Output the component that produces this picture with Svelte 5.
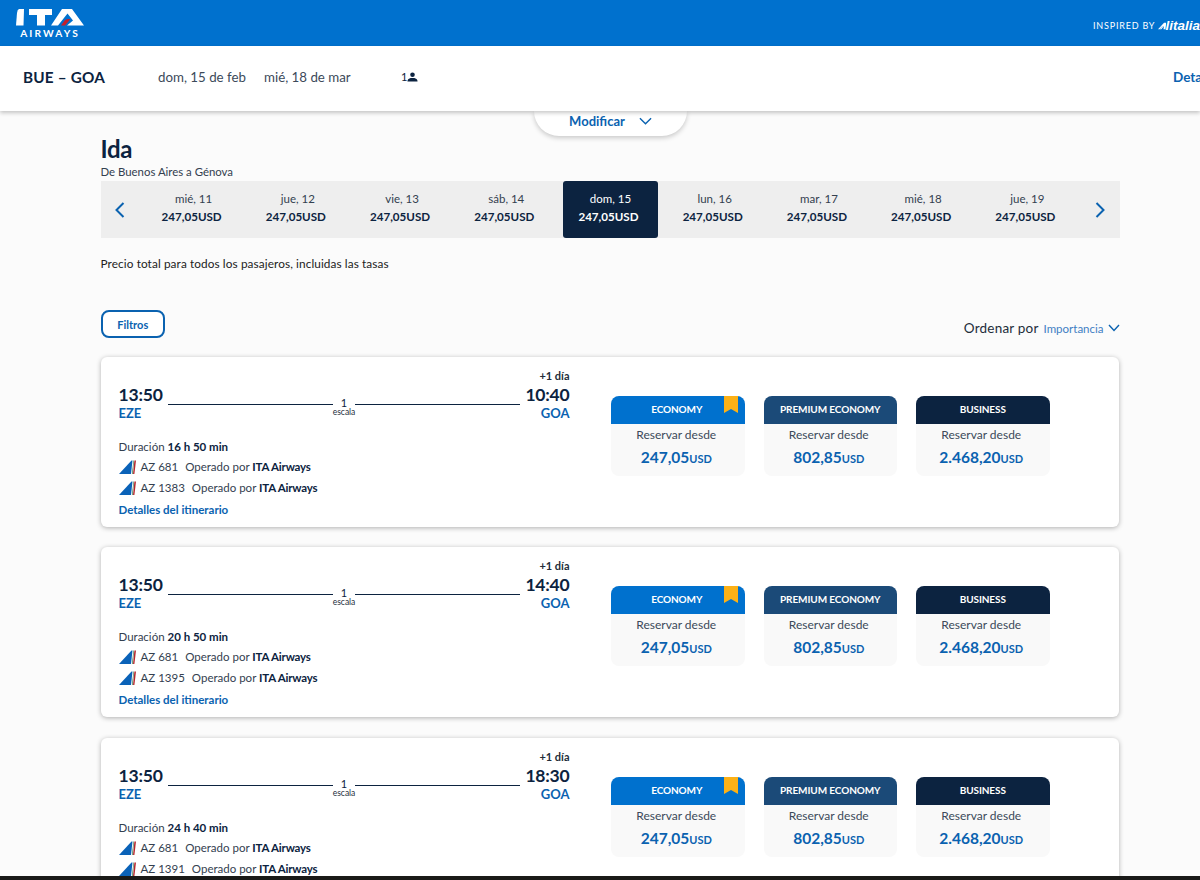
<script>
  const days = [
    ['mié, 11', false], ['jue, 12', false], ['vie, 13', false], ['sáb, 14', false], ['dom, 15', true],
    ['lun, 16', false], ['mar, 17', false], ['mié, 18', false], ['jue, 19', false]
  ];
  const flights = [
    { arr: '10:40', dur: '16 h 50 min', second: 'AZ 1383' },
    { arr: '14:40', dur: '20 h 50 min', second: 'AZ 1395' },
    { arr: '18:30', dur: '24 h 40 min', second: 'AZ 1391' }
  ];
  const fares = [
    { name: 'ECONOMY', price: '247,05', cls: 'eco', flag: true },
    { name: 'PREMIUM ECONOMY', price: '802,85', cls: 'prem', flag: false },
    { name: 'BUSINESS', price: '2.468,20', cls: 'bus', flag: false }
  ];
</script>

{#snippet tail()}
  <svg class="tail" viewBox="0 0 17 14" width="17" height="14" aria-hidden="true">
    <path d="M0 14 L12.500 0.500 L13.500 0.500 L12 14 Z" fill="#0a62b8" />
    <path d="M13 14 L14.400 0.500 L15 0.500 L13.700 14 Z" fill="#2e7d4f" />
    <path d="M14 14 L15.400 0.500 L17 0.500 L15.400 14 Z" fill="#b5272d" />
  </svg>
{/snippet}

<div class="page">
  <header class="top">
    <div class="logo">
      <svg viewBox="0 0 70 20" width="70" height="20" aria-hidden="true">
        <path d="M4 3 H9 L8.500 19.500 H1 L2 7 Q2.300 3.500 4 3 Z" fill="#fff" />
        <path d="M14 3 H37 V9 H30 V19.500 H22 V9 H14 Z" fill="#fff" />
        <path d="M36 19.500 L47 3 H57 L69 19.500 H52 L58 14.500 L52.500 7.500 L43 19.500 Z" fill="#fff" />
        <path d="M46 19.500 L50 14 C52 12.800 54 12.800 55.500 13 L50 19.500 Z" fill="#c4202b" />
      </svg>
      <span class="airways">AIRWAYS</span>
    </div>
    <div class="inspired">
      <span class="by">INSPIRED BY</span>
      <svg viewBox="0 0 15 12" width="15" height="12" aria-hidden="true">
        <path d="M0 12 L11 0 H15 L13.500 12 H10 L10.800 6 L6 12 Z" fill="#fff" />
        <path d="M3 12 L8 6.500" stroke="#0071ce" stroke-width="0.700" />
      </svg>
      <span class="alitalia">litalia</span>
    </div>
  </header>

  <div class="summary">
    <span class="route">BUE – GOA</span>
    <span class="date first">dom, 15 de feb</span>
    <span class="date second">mié, 18 de mar</span>
    <span class="pax">1<svg viewBox="0 0 12 10" width="11" height="10" aria-hidden="true"><circle cx="6" cy="2.600" r="2.500" fill="#0c2340" /><path d="M0.500 10 C0.500 6.500 3.500 6 6 6 C8.500 6 11.500 6.500 11.500 10 Z" fill="#0c2340" /></svg></span>
    <span class="details">Detalles</span>
  </div>

  <button class="modify">
    <span>Modificar</span>
    <svg viewBox="0 0 14 8" width="13" height="8" aria-hidden="true"><path d="M1 1 L7 7 L13 1" fill="none" stroke="#0a62b0" stroke-width="1.500" /></svg>
  </button>

  <main>
    <h1>Ida</h1>
    <p class="sub">De Buenos Aires a Génova</p>

    <div class="strip">
      <div class="arrow left">
        <svg viewBox="0 0 10 16" width="10" height="16" aria-hidden="true"><path d="M8.500 1 L1.500 8 L8.500 15" fill="none" stroke="#0a62b0" stroke-width="2" /></svg>
      </div>
      {#each days as [label, active]}
        <div class="day" class:active>
          <span class="d">{label}</span>
          <span class="p">247,05USD</span>
        </div>
      {/each}
      <div class="arrow right">
        <svg viewBox="0 0 10 16" width="10" height="16" aria-hidden="true"><path d="M1.500 1 L8.500 8 L1.500 15" fill="none" stroke="#0a62b0" stroke-width="2" /></svg>
      </div>
    </div>

    <p class="note">Precio total para todos los pasajeros, incluidas las tasas</p>

    <div class="tools">
      <button class="filters">Filtros</button>
      <div class="sort">
        <span class="sl">Ordenar por</span>
        <span class="sv">Importancia</span>
        <svg viewBox="0 0 12 8" width="12" height="8" aria-hidden="true"><path d="M1 1 L6 6.500 L11 1" fill="none" stroke="#0a62b0" stroke-width="1.400" /></svg>
      </div>
    </div>

    <div class="list">
      {#each flights as f}
        <article class="card">
          <div class="info">
            <div class="plus">+1 día</div>
            <div class="times">
              <div class="end">
                <span class="time">13:50</span>
                <span class="code">EZE</span>
              </div>
              <div class="line">
                <span class="rule"></span>
                <span class="stops"><b>1</b><i>escala</i></span>
                <span class="rule"></span>
              </div>
              <div class="end right">
                <span class="time">{f.arr}</span>
                <span class="code">GOA</span>
              </div>
            </div>
            <div class="dur">Duración <strong>{f.dur}</strong></div>
            <div class="op">{@render tail()}<span class="no">AZ 681</span><span>Operado por <strong>ITA Airways</strong></span></div>
            <div class="op">{@render tail()}<span class="no">{f.second}</span><span>Operado por <strong>ITA Airways</strong></span></div>
            <a class="more" href="#top">Detalles del itinerario</a>
          </div>
          <div class="fares">
            {#each fares as fare}
              <div class="fare">
                <div class="head {fare.cls}">
                  {fare.name}
                  {#if fare.flag}
                    <svg class="flag" viewBox="0 0 14 17" width="14" height="17" aria-hidden="true"><path d="M0 0 H14 V17 L7 13 L0 17 Z" fill="#fcb116" /></svg>
                  {/if}
                </div>
                <div class="from">Reservar desde</div>
                <div class="price">{fare.price}<small>USD</small></div>
              </div>
            {/each}
          </div>
        </article>
      {/each}
    </div>
  </main>

  <div class="taskbar"></div>
</div>

<style>
  :global(body) { margin: 0; background: #fbfbfb; overflow: hidden; }
  .page {
    position: relative; width: 1200px; height: 880px; overflow: hidden;
    font-family: Lato, "Liberation Sans", sans-serif; color: #0c2340; background: #fbfbfb;
  }
  .top {
    height: 46px; background: #0071ce; display: flex; justify-content: space-between; align-items: flex-start;
    overflow: hidden;
  }
  .logo { margin-left: 15px; margin-top: 6px; width: 70px; display: flex; flex-direction: column; align-items: center; }
  .logo svg { display: block; }
  .airways { color: #fff; font-size: 10.200px; letter-spacing: 2.100px; line-height: 12px; font-weight: 700; margin-top: 1px; }
  .inspired { display: flex; align-items: center; margin-top: 18px; color: #fff; width: 107px; white-space: nowrap; flex: none; }
  .by { font-size: 9px; letter-spacing: 0.800px; font-weight: 400; margin-right: 3px; }
  .alitalia { font-family: "Liberation Sans", sans-serif; font-size: 13.500px; font-weight: 700; font-style: italic; margin-left: -1px; }

  .summary {
    position: relative; z-index: 2; height: 65px; box-sizing: border-box; padding-bottom: 4px; background: #fff; box-shadow: 0 2px 4px rgba(0, 0, 0, 0.22);
    display: flex; align-items: center; white-space: nowrap; overflow: hidden;
  }
  .route { margin-left: 23px; font-size: 15.300px; font-weight: 700; width: 135px; letter-spacing: 0.200px; }
  .date { font-size: 13.300px; color: #3c4a5a; }
  .first { width: 106px; }
  .second { width: 137px; }
  .pax { display: flex; align-items: center; font-size: 11px; font-weight: 400; width: 771px; flex: none; }
  .details { color: #0a62b0; font-size: 13.500px; font-weight: 700; position: absolute; left: 1173px; }

  .modify {
    position: absolute; z-index: 1; left: 534px; top: 111px; width: 153px; height: 25px; border: 0; padding: 0 0 6px;
    background: #fff; border-radius: 0 0 26px 26px; box-shadow: 0 2px 5px rgba(0, 0, 0, 0.2);
    display: flex; align-items: center; justify-content: center; gap: 14px;
    font: 700 13px Lato, sans-serif; color: #0a62b0;
  }

  main { width: 1019px; margin-left: 100.500px; }
  h1 { margin: 24px 0 0; font-size: 24px; line-height: 28px; font-weight: 700; color: #0c2340; letter-spacing: -0.300px; }
  .sub { margin: 2px 0 0; font-size: 11.400px; line-height: 13px; color: #33404f; }

  .strip { margin-top: 3px; height: 57px; background: #eeeeee; display: flex; }
  .arrow { flex: none; display: flex; align-items: center; }
  .arrow.left { width: 41px; padding-left: 14px; box-sizing: border-box; }
  .arrow.right { width: 40px; padding-left: 16px; box-sizing: border-box; }
  .day {
    flex: 1; display: flex; flex-direction: column; align-items: center; gap: 3px; padding-top: 10px; box-sizing: border-box;
    border-radius: 3px; color: #0c2340; margin: 0 4.600px;
  }
  .day.active { background: #0c2340; color: #fff; }
  .d { font-size: 11.500px; line-height: 15px; color: #33404f; }
  .active .d { color: #fff; }
  .p { font-size: 11.600px; line-height: 15px; font-weight: 700; margin-right: 4px; }

  .note { margin: 19px 0 0; font-size: 11.800px; line-height: 14px; color: #222; letter-spacing: 0.100px; }

  .tools { margin-top: 39px; height: 47px; display: flex; justify-content: space-between; align-items: flex-start; }
  .filters {
    width: 64.500px; height: 28px; border: 2px solid #0a62b0; border-radius: 8px; background: #fff; box-sizing: border-box;
    font: 700 11px Lato, sans-serif; color: #0a62b0; padding: 0;
  }
  .sort { display: flex; align-items: center; margin-top: 10px; height: 16px; }
  .sl { font-size: 13.500px; color: #222d3a; margin-right: 5px; letter-spacing: 0.200px; }
  .sv { font-size: 11.500px; color: #3f7fc4; margin-right: 4px; }

  .list { display: flex; flex-direction: column; gap: 20.400px; }
  .card {
    flex: none; height: 170px; box-sizing: border-box; width: 1018px; background: #fff; border-radius: 6px;
    box-shadow: 0 1px 5px rgba(0, 0, 0, 0.3); display: flex; padding: 12px 0 0 18px;
  }
  .info { width: 451px; flex: none; }
  .plus { text-align: right; font-size: 11px; line-height: 14px; font-weight: 700; color: #222d3a; }
  .times { display: flex; align-items: flex-start; margin-top: 1px; }
  .end { display: flex; flex-direction: column; flex: none; }
  .end.right { align-items: flex-end; }
  .time { font-size: 17.500px; line-height: 20px; padding-top: 1px; font-weight: 700; letter-spacing: -0.200px; }
  .code { font-size: 13px; line-height: 16px; font-weight: 700; color: #0a62b0; }
  .line { flex: 1; display: flex; align-items: flex-start; margin: 0 5px; }
  .rule { flex: 1; height: 1px; background: #0c2340; margin-top: 20px; }
  .stops { display: flex; flex-direction: column; align-items: center; width: 22px; margin-top: 13px; }
  .stops b { font-weight: 400; font-size: 11px; line-height: 12px; }
  .stops i { font-style: normal; font-size: 8.500px; line-height: 9px; color: #222d3a; margin-top: -1px; }

  .dur { margin-top: 19px; font-size: 11.500px; line-height: 14px; color: #33404f; }
  .dur strong { color: #0c2340; }
  .op { display: flex; align-items: center; height: 14px; margin-top: 7px; font-size: 11.500px; line-height: 14px; color: #33404f; white-space: nowrap; }
  .dur + .op { margin-top: 6px; }
  .op strong { color: #0c2340; letter-spacing: -0.200px; }
  .tail { margin-right: 5px; flex: none; }
  .no { margin-right: 7px; }
  .more { display: block; margin-top: 8px; font-size: 11.500px; line-height: 14px; font-weight: 700; color: #0a62b0; text-decoration: none; }

  .fares { display: flex; gap: 19px; margin-left: 41.500px; margin-top: 27px; align-items: flex-start; }
  .fare { width: 133.500px; height: 80px; background: #f9f9f9; border-radius: 8px; text-align: center; }
  .head {
    position: relative; height: 28px; border-radius: 8px 8px 0 0; color: #fff; font-size: 10px; line-height: 27px; font-weight: 700; letter-spacing: -0.100px;
  }
  .eco { background: #0071ce; padding-right: 2px; }
  .prem { background: #1b4a78; }
  .bus { background: #0c2340; }
  .flag { position: absolute; top: 0; right: 7px; }
  .from { margin-top: 4px; padding-right: 3px; font-size: 12px; line-height: 14px; color: #3c4a5a; }
  .price { margin-top: 5px; padding-right: 3px; font-size: 15.500px; line-height: 20px; font-weight: 700; color: #0a62b0; }
  .price small { font-size: 11px; font-weight: 700; }

  .taskbar { position: absolute; left: 0; right: 0; bottom: 0; height: 4px; background: #1a1a18; }
</style>
